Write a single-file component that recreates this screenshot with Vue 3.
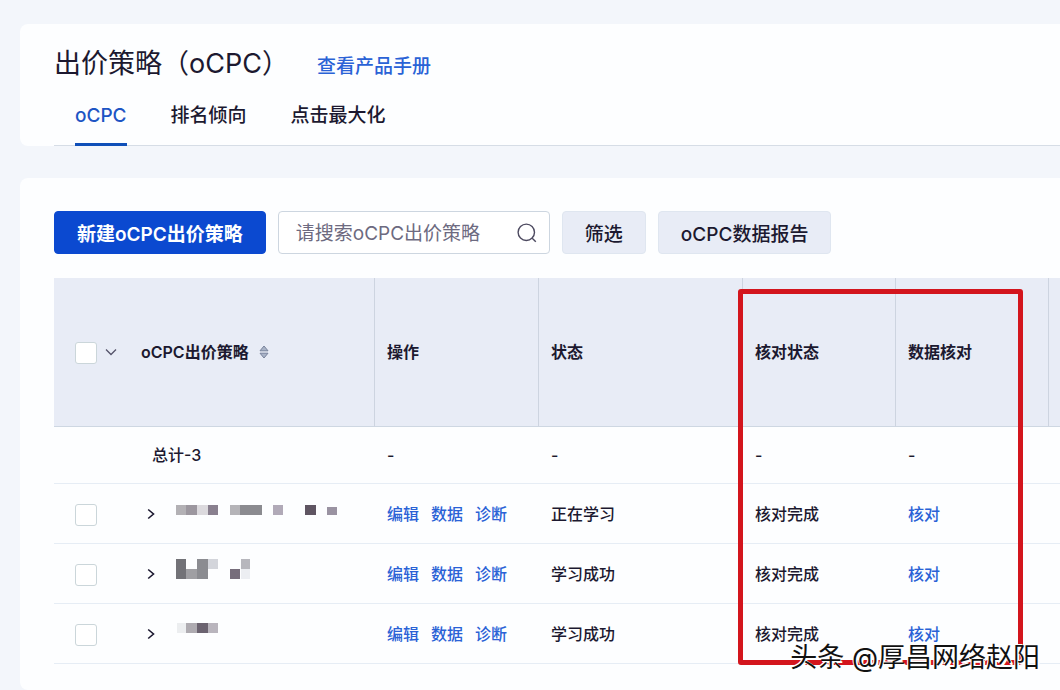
<template>
  <div class="page">
    <header class="card page-header">
      <div class="title-row">
        <h1>出价策略（oCPC）</h1>
        <a href="#" class="manual-link">查看产品手册</a>
      </div>
      <nav class="tabs">
        <a
          v-for="tab in tabs"
          :key="tab"
          href="#"
          class="tab"
          :class="{ active: tab === activeTab }"
          @click.prevent="activeTab = tab"
        >{{ tab }}</a>
      </nav>
    </header>

    <main class="card content">
      <div class="toolbar">
        <button type="button" class="btn btn-primary">新建oCPC出价策略</button>
        <label class="search">
          <input v-model="keyword" type="text" placeholder="请搜索oCPC出价策略" aria-label="请搜索oCPC出价策略" />
          <svg width="20" height="20" viewBox="0 0 20 20" aria-hidden="true">
            <circle cx="9.3" cy="9.3" r="8.2" />
            <path d="M15.2 15.2L18.8 18.8" />
          </svg>
        </label>
        <button type="button" class="btn">筛选</button>
        <button type="button" class="btn">oCPC数据报告</button>
      </div>

      <div class="table-wrap">
        <table>
          <colgroup>
            <col class="col-name" />
            <col class="col-action" />
            <col class="col-status" />
            <col class="col-check" />
            <col class="col-check" />
            <col />
          </colgroup>
          <thead>
            <tr>
              <th>
                <div class="name-head">
                  <input v-model="allChecked" type="checkbox" aria-label="全选" />
                  <svg class="caret" width="12" height="8" viewBox="0 0 12 8" aria-hidden="true">
                    <path d="M1 1.5L6 6.5L11 1.5" />
                  </svg>
                  <span>oCPC出价策略</span>
                  <svg class="sorter" width="10" height="14" viewBox="0 0 10 14" aria-hidden="true">
                    <path d="M1 5.8L5 1L9 5.8Z" />
                    <path d="M1 8.2L5 13L9 8.2Z" />
                  </svg>
                </div>
              </th>
              <th>操作</th>
              <th>状态</th>
              <th>核对状态</th>
              <th>数据核对</th>
              <th></th>
            </tr>
          </thead>
          <tbody>
            <tr class="total">
              <td class="total-name">总计-3</td>
              <td>-</td>
              <td>-</td>
              <td>-</td>
              <td>-</td>
              <td></td>
            </tr>
            <tr v-for="row in rows" :key="row.id">
              <td>
                <div class="name-cell">
                  <input v-model="row.checked" type="checkbox" :aria-label="`选择 ${row.id}`" />
                  <button type="button" class="expand" aria-label="展开">
                    <svg width="8" height="12" viewBox="0 0 8 12" aria-hidden="true">
                      <path d="M1.2 1.5L6.5 6L1.2 10.5" />
                    </svg>
                  </button>
                  <svg class="mosaic" width="170" height="40" viewBox="0 0 170 40" aria-hidden="true">
                    <rect
                      v-for="(b, i) in row.blocks"
                      :key="i"
                      :x="b[0]"
                      :y="b[1]"
                      :width="b[2]"
                      :height="b[3]"
                      :fill="b[4]"
                    />
                  </svg>
                </div>
              </td>
              <td>
                <div class="actions">
                  <a href="#">编辑</a>
                  <a href="#">数据</a>
                  <a href="#">诊断</a>
                </div>
              </td>
              <td>{{ row.status }}</td>
              <td>核对完成</td>
              <td><a href="#">核对</a></td>
              <td></td>
            </tr>
          </tbody>
        </table>
        <div class="highlight"></div>
      </div>
    </main>

    <div class="watermark">头条 @厚昌网络赵阳</div>
  </div>
</template>

<script setup>
import { ref, computed } from 'vue';

const tabs = ['oCPC', '排名倾向', '点击最大化'];
const activeTab = ref('oCPC');
const keyword = ref('');

// blocks: [x, y, largura, altura, cor] dos nomes ocultados
const rows = ref([
  {
    id: 1,
    checked: false,
    status: '正在学习',
    blocks: [
      [0, 11, 10, 10, '#b3b1b5'],
      [10, 11, 11, 10, '#9c979f'],
      [21, 11, 11, 10, '#dcdade'],
      [32, 11, 10, 10, '#89808f'],
      [54, 11, 10, 10, '#b5b4b8'],
      [64, 11, 22, 10, '#8b8b90'],
      [97, 11, 10, 10, '#b1aab8'],
      [129, 11, 11, 10, '#5f5562'],
      [151, 13, 10, 8, '#9a93a2']
    ]
  },
  {
    id: 2,
    checked: false,
    status: '学习成功',
    blocks: [
      [0, 5, 10, 20, '#727277'],
      [10, 15, 11, 10, '#9f9fa3'],
      [21, 5, 11, 20, '#8b8c91'],
      [32, 5, 10, 10, '#d3d5db'],
      [54, 15, 10, 10, '#766d7b'],
      [65, 5, 9, 10, '#b7b7bd'],
      [65, 15, 9, 10, '#eceef2']
    ]
  },
  {
    id: 3,
    checked: false,
    status: '学习成功',
    blocks: [
      [1, 9, 9, 10, '#eceef0'],
      [10, 9, 11, 10, '#aeabb1'],
      [21, 9, 11, 10, '#6b6370'],
      [32, 9, 10, 10, '#b9b5bd']
    ]
  }
]);

const allChecked = computed({
  get: () => rows.value.every((r) => r.checked),
  set: (value) => rows.value.forEach((r) => { r.checked = value; })
});
</script>

<style>
body {
  margin: 0;
  background: #f3f6fb;
}
</style>

<style scoped>
.page {
  position: relative;
  display: flex;
  flex-direction: column;
  gap: 32px;
  min-height: 100vh;
  box-sizing: border-box;
  padding: 24px 0 0 20px;
  overflow: hidden;
  background: #f3f6fb;
  color: #1c1930;
  font-family: Inter, "Noto Sans CJK SC", sans-serif;
  font-size: 16px;
  line-height: 24px;
  font-weight: 500;
}

a {
  color: #2a62d6;
  text-decoration: none;
}

.card {
  background: #fdfeff;
  border-radius: 8px 0 0 8px;
  padding-left: 34px;
}

.title-row {
  display: flex;
  align-items: center;
  gap: 28px;
  padding-top: 22px;
}

h1 {
  margin: 0;
  font-size: 27px;
  line-height: 36px;
  font-weight: 400;
}

.manual-link {
  padding-top: 6px;
  font-size: 19px;
}

.tabs {
  display: flex;
  gap: 44px;
  padding-left: 21px;
  border-bottom: 1px solid #d6dde6;
}

.tab {
  margin-bottom: -1px;
  padding: 22px 0 15px;
  border-bottom: 3px solid transparent;
  color: #1c1930;
  font-size: 19px;
}

.tab.active {
  border-bottom-color: #0f4fb8;
  color: #1d55c4;
}

.content {
  flex: 1;
  padding-top: 33px;
}

.toolbar {
  display: flex;
  align-items: center;
  gap: 12px;
  margin-bottom: 24px;
}

.btn {
  box-sizing: border-box;
  height: 43px;
  padding: 0 22px;
  border: 1px solid #dfe6f0;
  border-radius: 4px;
  background: #e8ecf6;
  color: #1c1930;
  font-family: inherit;
  font-size: 19px;
  font-weight: 500;
  cursor: pointer;
}

.btn-primary {
  border-color: #0b49d0;
  background: #0b49d0;
  color: #fff;
  font-weight: 600;
}

.search {
  display: flex;
  align-items: center;
  box-sizing: border-box;
  width: 272px;
  height: 43px;
  padding: 0 12px 0 17px;
  border: 1px solid #cdd6e0;
  border-radius: 4px;
  background: #fff;
}

.search input {
  flex: 1;
  min-width: 0;
  height: 30px;
  padding: 2px 0 0;
  border: none;
  outline: none;
  background: none;
  color: #1c1930;
  font-family: inherit;
  font-size: 19px;
}

.search input::placeholder {
  color: #6d6a80;
}

.search svg {
  fill: none;
  stroke: #4d4a60;
  stroke-width: 1.4;
}

.table-wrap {
  position: relative;
}

table {
  width: 100%;
  table-layout: fixed;
  border-collapse: separate;
  border-spacing: 0;
}

.col-name {
  width: 321px;
}

.col-action {
  width: 164px;
}

.col-status {
  width: 204px;
}

.col-check {
  width: 153px;
}

th,
td {
  box-sizing: border-box;
  height: 60px;
  padding: 0 0 0 12px;
  border-bottom: 1px solid #e6edf5;
  text-align: left;
}

th {
  height: 149px;
  border-right: 1px solid #cdd4e0;
  border-bottom-color: #ced7e2;
  background: #e8ecf6;
  font-weight: 600;
}

th:last-child {
  border-right: none;
}

th:first-child,
td:first-child {
  padding-left: 21px;
}

.total td {
  height: 57px;
}

.total .total-name {
  padding-left: 98px;
}

.name-head,
.name-cell {
  display: flex;
  align-items: center;
}

input[type="checkbox"] {
  appearance: none;
  box-sizing: border-box;
  width: 22px;
  height: 22px;
  margin: 2px 0 0;
  border: 1px solid #cbd6da;
  border-radius: 3px;
  background: #fff;
}

input[type="checkbox"]:checked {
  background: #0b49d0;
}

.caret {
  margin: 0 24px 0 8px;
  fill: none;
  stroke: #55536a;
  stroke-width: 1.3;
}

.sorter {
  margin-left: 10px;
  fill: #aab4c8;
  stroke: #77829b;
  stroke-width: 1;
}

.expand {
  display: flex;
  margin: 0 21px 0 50px;
  padding: 0;
  border: none;
  background: none;
}

.expand svg {
  fill: none;
  stroke: #1c1930;
  stroke-width: 1.6;
}

.actions {
  display: flex;
  gap: 12px;
}

/* marca as colunas de conferência */
.highlight {
  position: absolute;
  top: 11px;
  left: 684px;
  box-sizing: border-box;
  width: 285px;
  height: 376px;
  border: 5px solid #d3151d;
  border-radius: 3px;
  pointer-events: none;
}

.watermark {
  position: absolute;
  right: 20px;
  bottom: 14px;
  color: #111;
  font-size: 27px;
  line-height: 36px;
  font-weight: 400;
  text-shadow: 1px 1px 0 #fff, 2px 2px 0 #fff, -1px -1px 0 #fff;
}
</style>
